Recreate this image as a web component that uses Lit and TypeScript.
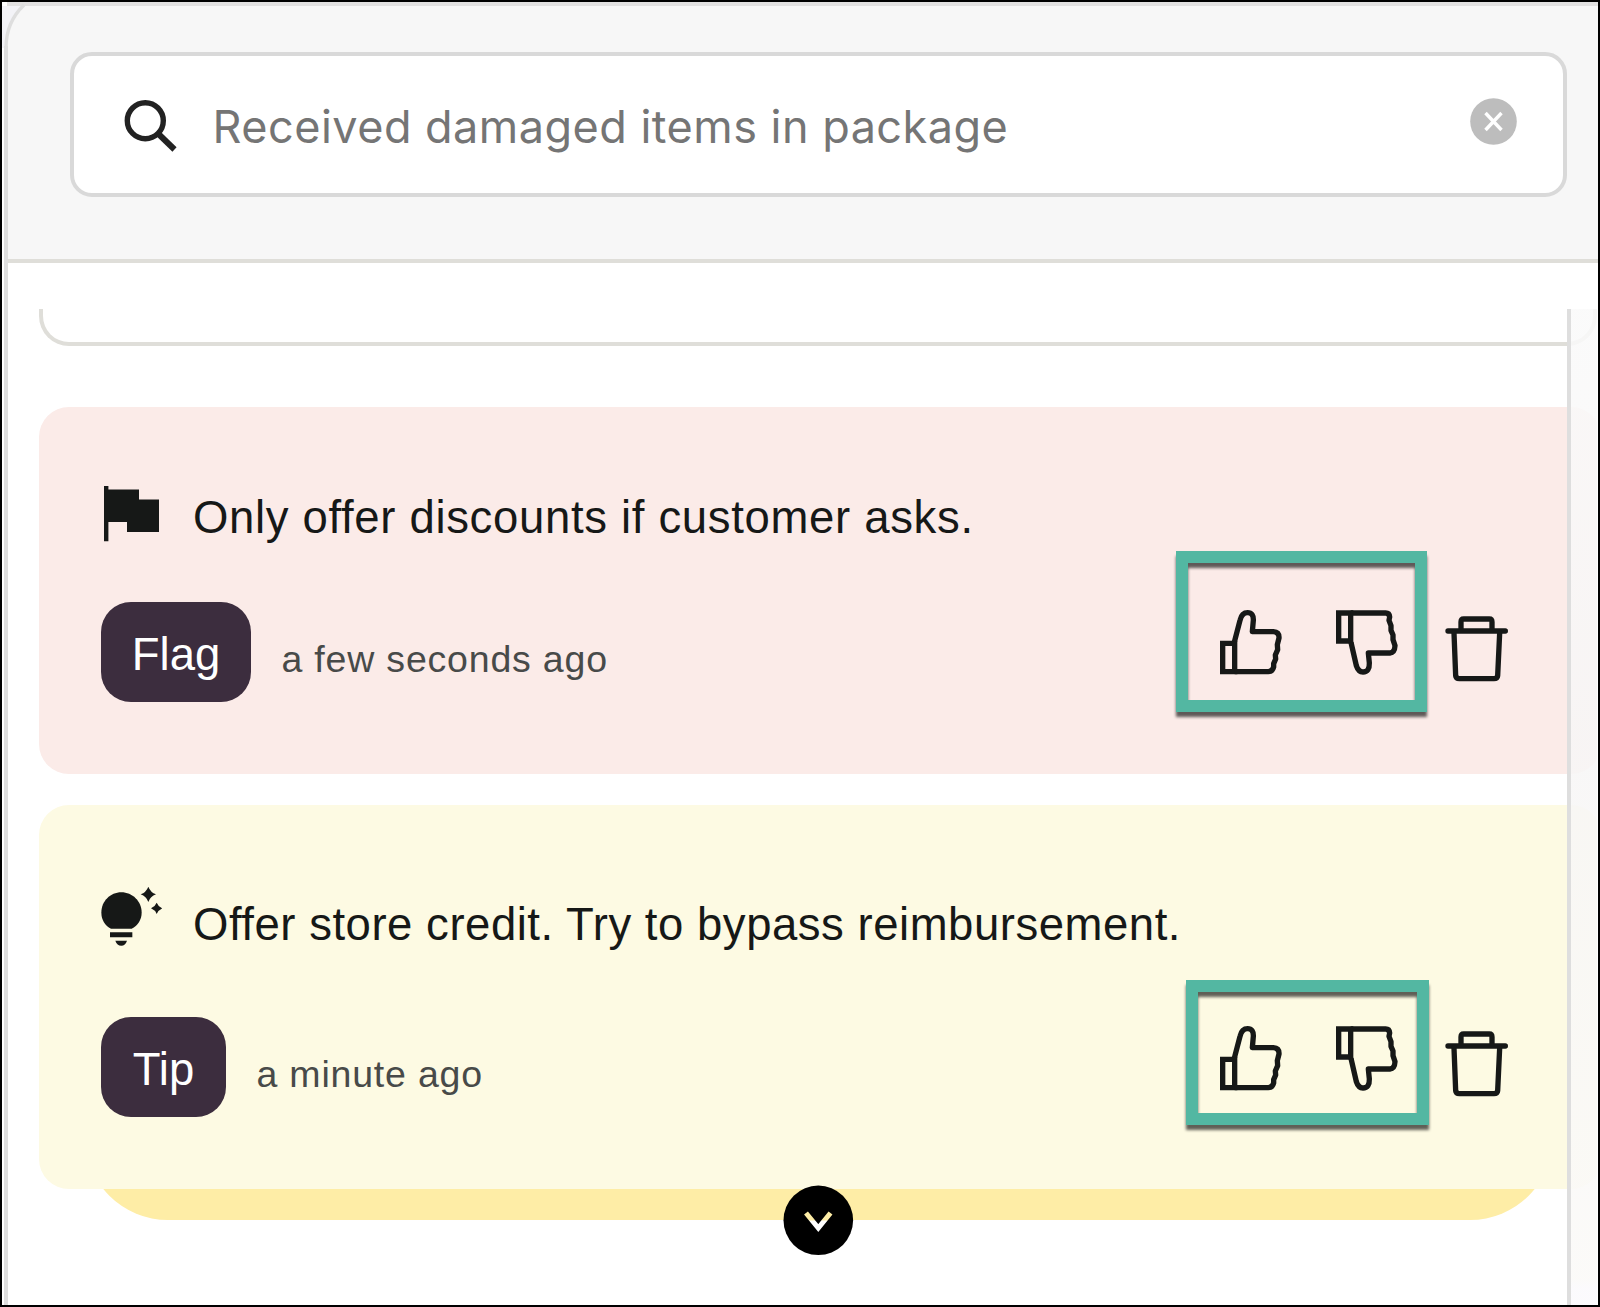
import { LitElement, html, css } from "lit";
import { customElement, property } from "lit/decorators.js";

type Kind = "flag" | "tip";

interface Note {
  kind: Kind;
  label: string;
  text: string;
  time: string;
}

const NOTES: Note[] = [
  { kind: "flag", label: "Flag", text: "Only offer discounts if customer asks.", time: "a few seconds ago" },
  { kind: "tip", label: "Tip", text: "Offer store credit. Try to bypass reimbursement.", time: "a minute ago" },
];

const flagIcon = html`<svg width="55" height="56" viewBox="0 0 55 56" fill="#161817">
  <path d="M0 0H4.4V3.6H35V13.4H55V46H23V36H4.4V55.3H0Z" />
</svg>`;

const bulbIcon = html`<svg width="61" height="59" viewBox="64 80 183 177" fill="#161817">
  <path d="M94 205C76 196 65 178 65 157C65 123 92 96 125 96S186 123 186 157C186 178 174 196 156 205Z" />
  <path d="M91 216H158V231H91ZM107 241H142Q137 256 125 256Q112 256 107 241Z" />
  <path d="M206 79Q212 96 229 102Q212 108 206 125Q200 108 183 102Q200 96 206 79Z" />
  <path d="M231 127Q236 139 248 144Q236 149 231 161Q226 149 214 144Q226 139 231 127Z" />
</svg>`;

const thumbUp = html`<svg class="up" width="62" height="65" viewBox="180 241 186 195"
  fill="none" stroke="#161817" stroke-width="16">
  <path d="M188 341H224V426H188Z" />
  <path stroke-linejoin="round" d="M222 341L240 272Q245 249 263 249Q281 249 280 272L277 306H340Q358 307 357 325L352 345L353 360L346 376L347 388L341 402L341 412Q337 426 325 426H224" />
</svg>`;

const thumbDown = html`<svg class="down" width="62" height="65" viewBox="527 241 186 195"
  fill="none" stroke="#161817" stroke-width="16">
  <path d="M535 250H571V334H535Z" />
  <path stroke-linejoin="round" d="M571 250H676Q687 250 688 262L686 272L692 288L692 302L698 316L698 330L704 348Q703 369 689 370H624L627 400Q628 427 608 427Q594 427 588 408L572 338" />
</svg>`;

const trash = html`<svg class="trash" width="63" height="66" viewBox="855 257 189 198"
  fill="none" stroke="#161817" stroke-width="16" stroke-linecap="round">
  <path d="M864 302H1036M903 298V275Q903 266 911 266H988Q996 266 996 275V298" />
  <path d="M882 308L887 436Q888 445 898 445H1002Q1012 445 1013 436L1019 308" />
</svg>`;

@customElement("note-card")
class NoteCard extends LitElement {
  @property({ attribute: false }) note!: Note;

  static styles = css`
    :host { display: block; }
    .card {
      box-sizing: border-box;
      padding: 80px 93px 0 62px;
      border-radius: 30px;
      color: #161817;
      font: 45.5px/60px "Liberation Sans", Arial, sans-serif;
    }
    .card.flag { height: 367px; background: #fbebe8; }
    .card.tip { height: 384px; padding-top: 89.5px; background: #fdfae3; }
    .title { display: flex; align-items: flex-start; height: 60px; white-space: nowrap; }
    .icon { display: flex; width: 92px; flex: none; }
    .flag .icon { margin: -1px 0 0 2.5px; width: 89.5px; }
    .tip .icon { margin-top: -8px; }
    .text { margin-top: 1px; letter-spacing: 0.67px; }
    .tip .text { margin-top: 0; letter-spacing: 0.53px; }
    .meta { display: flex; align-items: center; height: 100px; margin-top: 55.3px; }
    .tip .meta { margin-top: 62.7px; }
    .badge {
      display: flex; align-items: center; justify-content: center;
      box-sizing: border-box; width: 150px; height: 100px; padding-top: 5px;
      border-radius: 30px; background: #3c2d3e; color: #fff;
    }
    .tip .badge { width: 125px; }
    .time { margin: 13px 0 0 30.5px; font-size: 37.5px; color: #484a49; letter-spacing: 0.8px; white-space: nowrap; }
    .actions { display: flex; margin: -12px 0 0 auto; }
    .down { margin-left: 54px; }
    .trash { margin: 6px 0 0 47px; }
    .tip .trash { margin-top: 5px; }
  `;

  render() {
    const n = this.note;
    return html`<article class="card ${n.kind}">
      <div class="title">
        <span class="icon">${n.kind === "flag" ? flagIcon : bulbIcon}</span>
        <span class="text">${n.text}</span>
      </div>
      <div class="meta">
        <span class="badge">${n.label}</span>
        <span class="time">${n.time}</span>
        <div class="actions">${thumbUp}${thumbDown}${trash}</div>
      </div>
    </article>`;
  }
}

@customElement("app-root")
class AppRoot extends LitElement {
  static styles = css`
    :host { display: block; }
    .frame {
      position: relative; box-sizing: border-box; width: 1600px; height: 1307px;
      border: 2px solid #000; overflow: hidden; background: #fff;
    }
    .corner { position: absolute; left: 0; top: 0; }
    .edge { position: absolute; left: 2px; top: 44px; bottom: 0; width: 4px; background: #dedede; }
    .header {
      box-sizing: border-box; height: 260.5px; margin-left: 5px; padding: 46px 31px 0 62.5px;
      background: #f7f7f7; border-top: 4px solid #e2e1e1; border-bottom: 4px solid #dfded9;
    }
    .search {
      display: flex; align-items: flex-start; box-sizing: border-box; height: 145px;
      border: 4px solid #d9d9d9; border-radius: 22px; background: #fff; padding: 0 46px 0 50px;
    }
    .lens { margin-top: 43px; flex: none; }
    .query {
      flex: 1; margin: 41px 0 0 35px; white-space: nowrap; color: #757575;
      font: 45px/60px Inter, sans-serif; letter-spacing: 0.48px;
    }
    .clear { margin-top: 42px; flex: none; }
    .list { margin: 46.5px -8px 0 37px; height: 996px; overflow: hidden; }
    .previous {
      box-sizing: border-box; height: 36.5px; width: 1557.5px; border: 4px solid #dfded9; border-top: 0;
      border-radius: 0 0 30px 30px;
    }
    .first { margin-top: 61.5px; width: 1562px; }
    .second { margin-top: 31px; width: 1562px; }
    .more { height: 31px; margin-left: 46px; width: 1468px; overflow: hidden; display: flex; align-items: flex-end; }
    .tray { flex: none; width: 100%; height: 168px; border-radius: 83px; background: #feeda6; }
    .rail {
      position: absolute; left: 1565px; top: 307px; width: 31px; bottom: 0; box-sizing: border-box;
      border-left: 4px solid #dedede; border-right: 1px solid #fff;
      background: linear-gradient(rgba(250, 250, 250, 0.87), rgba(247, 246, 246, 0.87) 430px,
        rgba(251, 250, 248, 0.9) 970px, rgba(251, 250, 253, 0.9) 980px);
    }
    .expand { position: absolute; left: 781px; top: 1183px; }
    .mark {
      position: absolute; box-sizing: border-box; border: 12px solid #53b7a2;
      filter: drop-shadow(0 5px 1.7px rgba(0, 0, 0, 0.62));
    }
    .mark.one { left: 1174.3px; top: 549.3px; width: 251px; height: 160.5px; }
    .mark.two { left: 1184px; top: 978px; width: 243px; height: 144.7px; }
  `;

  render() {
    return html`<main class="frame">
      <header class="header">
        <div class="search">
          <svg class="lens" width="54" height="54" viewBox="0 0 54 54" fill="none" stroke="#222" stroke-width="5.4">
            <circle cx="21.3" cy="21.7" r="18" />
            <path d="M33.5 34L50.5 50.5" stroke-width="6" />
          </svg>
          <span class="query">Received damaged items in package</span>
          <svg class="clear" width="47" height="47" viewBox="0 0 47 47">
            <circle cx="23.5" cy="23.5" r="23.3" fill="#bdbdbd" />
            <path d="M15.5 15L31.5 32M31.5 15L15.5 32" stroke="#fff" stroke-width="3.4" />
          </svg>
        </div>
      </header>
      <section class="list">
        <div class="previous"></div>
        <note-card class="first" .note=${NOTES[0]}></note-card>
        <note-card class="second" .note=${NOTES[1]}></note-card>
        <div class="more"><div class="tray"></div></div>
      </section>
      <svg class="corner" width="26" height="46" viewBox="2 2 26 46">
        <path d="M2 6H24Q6 22 6 48H2Z" fill="#f3f3f7" />
        <path d="M24 5Q6 22 6 48" fill="none" stroke="#dedede" stroke-width="3.4" />
      </svg>
      <div class="edge"></div>
      <div class="rail"></div>
      <svg class="expand" width="71" height="71" viewBox="0 0 71 71">
        <defs>
          <linearGradient id="tone" gradientUnits="userSpaceOnUse" x1="0" y1="35" x2="0" y2="36">
            <stop offset="0" stop-color="#feeda6" />
            <stop offset="1" stop-color="#fff" />
          </linearGradient>
        </defs>
        <circle cx="35.3" cy="35.3" r="34.8" />
        <path d="M23 28L35.3 43L47.5 28" fill="none" stroke="url(#tone)" stroke-width="5" />
      </svg>
      <div class="mark one"></div>
      <div class="mark two"></div>
    </main>`;
  }
}
